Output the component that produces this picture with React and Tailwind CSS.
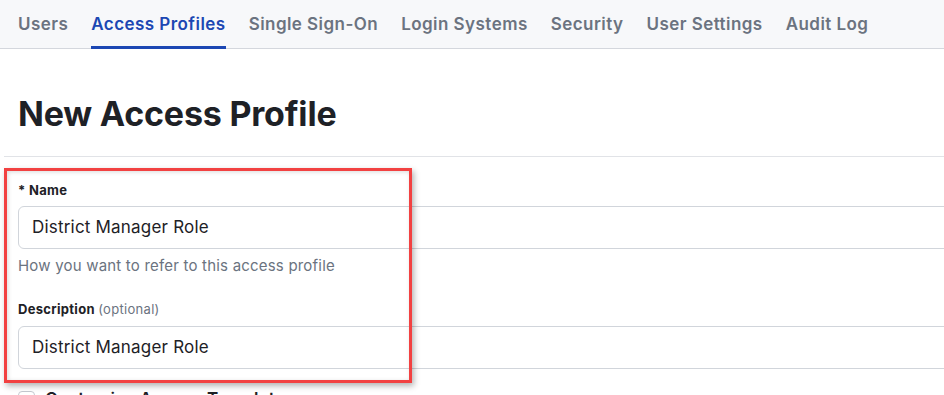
import React from "react";

const tabs = ["Users", "Access Profiles", "Single Sign-On", "Login Systems", "Security", "User Settings", "Audit Log"];

export default function App() {
  return (
    <div className="relative w-[944px] h-[395px] overflow-hidden bg-white text-[#1f2328]" style={{ fontFamily: "Inter, 'Noto Sans', sans-serif" }}>
      <nav className="flex h-[49px] items-stretch gap-[23px] border-b border-[#d4d7dd] bg-[#f7f8fa] pl-[18px]">
        {tabs.map((t, i) => (
          <div
            key={t}
            className={
              "flex items-center pt-[3px] text-[17px] font-semibold tracking-[0.45px] border-b-[3px] -mb-[1px] " +
              (i === 1 ? "border-[#1c47b3] text-[#1c47b3]" : "border-transparent text-[#6b7380]")
            }
          >
            {t}
          </div>
        ))}
      </nav>

      <h1 className="pl-[18px] pt-[45px] pb-[22px] text-[34px] font-bold leading-[40px] tracking-[-0.2px] text-[#1e2126]">
        New Access Profile
      </h1>
      <div className="ml-[4px] border-t border-[#e1e3e7]" />

      <div className="pl-[18px] pt-[24px]">
        <label className="block text-[13px] font-bold leading-[18px] tracking-[0.3px] text-[#1e2126]">* Name</label>
        <div className="mt-[7px] flex h-[43px] w-[960px] items-center rounded-[6px] border border-[#d1d5db] px-[13px] text-[17px] tracking-[0.2px] text-[#1e2126]">
          District Manager Role
        </div>
        <p className="mt-[7px] text-[15px] leading-[20px] tracking-[0.2px] text-[#6b7380]">How you want to refer to this access profile</p>

        <label className="mt-[24px] block text-[13px] font-bold leading-[18px] tracking-[0.3px] text-[#1e2126]">
          Description <span className="font-normal text-[#6b7380]">(optional)</span>
        </label>
        <div className="mt-[8px] flex h-[43px] w-[960px] items-center rounded-[6px] border border-[#d1d5db] px-[13px] text-[17px] tracking-[0.2px] text-[#1e2126]">
          District Manager Role
        </div>

        <div className="mt-[18px] flex items-center gap-[10px]">
          <div className="h-[17px] w-[17px] rounded-[4px] border border-[#c5c9d0] bg-white" />
          <span className="text-[17px] font-semibold tracking-[0.3px] text-[#1e2126]">Customize Access Template</span>
        </div>
      </div>

      <div className="pointer-events-none absolute left-[4px] top-[168px] h-[215px] w-[408px] border-[3px] border-[#f24141] shadow-[2px_3px_6px_rgba(0,0,0,0.3),inset_1px_1px_4px_rgba(0,0,0,0.15)]" />
    </div>
  );
}
